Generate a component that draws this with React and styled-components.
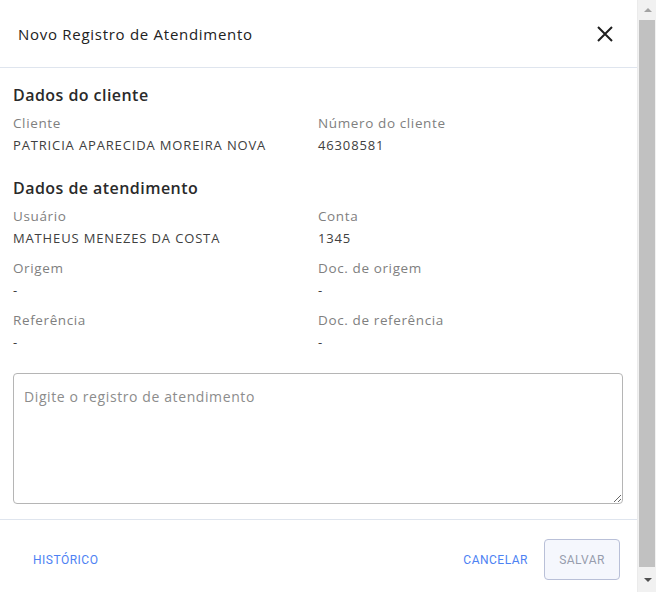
import React from "react";
import styled, { createGlobalStyle } from "styled-components";

const Global = createGlobalStyle`
  html, body { margin: 0; padding: 0; background: #ffffff; }
  * { box-sizing: border-box; }
`;

const Dialog = styled.div`
  width: 656px;
  height: 592px;
  display: flex;
  background: #ffffff;
  overflow: hidden;
  font-family: "Open Sans", "Liberation Sans", sans-serif;
  color: #333333;
`;

const Content = styled.div`
  flex: 1;
  min-width: 0;
  overflow: hidden;
`;

const ScrollTrack = styled.div`
  width: 19px;
  flex: none;
  display: flex;
  flex-direction: column;
  background: #f1f1f1;
  border-left: 1px solid #ebebeb;
`;

const ScrollArrow = styled.div`
  height: ${(p) => (p.$down ? 25 : 20)}px;
  display: flex;
  align-items: center;
  justify-content: center;
  padding-left: 1px;
`;

const ScrollThumb = styled.div`
  flex: 1;
  margin: 0 1px 0 1px;
  background: #c1c1c1;
`;

const Header = styled.header`
  height: 68px;
  display: flex;
  align-items: center;
  justify-content: space-between;
  padding: 0 24px 0 18px;
  border-bottom: 1px solid #dfe5ee;
`;

const Title = styled.h1`
  margin: 0;
  font-size: 15px;
  font-weight: 400;
  letter-spacing: 0.72px;
  color: #222222;
`;

const CloseButton = styled.button`
  width: 16px;
  height: 16px;
  padding: 0;
  border: none;
  background: transparent;
  display: flex;
  align-items: center;
  justify-content: center;
  cursor: pointer;
`;

const Body = styled.div`
  padding: 15px 14px 15px 13px;
  border-bottom: 1px solid #dfe5ee;
`;

const Section = styled.section`
  & + & { margin-top: 21px; }
`;

const SectionTitle = styled.h2`
  margin: 0 0 6px;
  font-size: 16px;
  line-height: 24px;
  font-weight: 600;
  letter-spacing: 0.45px;
  color: #2a2a2a;
`;

const FieldGrid = styled.div`
  display: grid;
  grid-template-columns: 305px 1fr;
  row-gap: 10px;
`;

const Field = styled.div`
  display: flex;
  flex-direction: column;
  gap: 2px;
`;

const Label = styled.span`
  font-size: 13.5px;
  line-height: 20px;
  letter-spacing: 0.62px;
  color: #808080;
`;

const Value = styled.span`
  font-size: 13px;
  line-height: 20px;
  letter-spacing: 0.85px;
  color: #404040;
`;

const Notes = styled.textarea`
  display: block;
  width: 100%;
  height: 131px;
  margin-top: 21px;
  padding: 13px 10px;
  border: 1px solid #b5b5b5;
  border-radius: 4px;
  font-family: inherit;
  font-size: 14px;
  line-height: 20px;
  letter-spacing: 0.6px;
  color: #333333;
  resize: vertical;
  outline: none;
  &::placeholder { color: #8c8c8c; }
`;

const Footer = styled.footer`
  display: flex;
  align-items: center;
  justify-content: space-between;
  padding: 19px 17px 21px 20px;
`;

const Actions = styled.div`
  display: flex;
  align-items: center;
  gap: 3px;
`;

const TextButton = styled.button`
  border: none;
  background: transparent;
  padding: 0 13px;
  height: 41px;
  font-family: "Roboto", "Liberation Sans", sans-serif;
  font-size: 12px;
  font-weight: 400;
  letter-spacing: 0.5px;
  color: #4d82f3;
  text-transform: uppercase;
  cursor: pointer;
`;

const OutlineButton = styled.button`
  width: 76px;
  height: 41px;
  border: 1px solid #b9c0d8;
  border-radius: 4px;
  background: #f5f7fd;
  font-family: "Roboto", "Liberation Sans", sans-serif;
  font-size: 12px;
  font-weight: 400;
  letter-spacing: 0.45px;
  color: #979dad;
  text-transform: uppercase;
`;

const clientFields = [
  ["Cliente", "PATRICIA APARECIDA MOREIRA NOVA"],
  ["Número do cliente", "46308581"],
];

const serviceFields = [
  ["Usuário", "MATHEUS MENEZES DA COSTA"],
  ["Conta", "1345"],
  ["Origem", "-"],
  ["Doc. de origem", "-"],
  ["Referência", "-"],
  ["Doc. de referência", "-"],
];

function Fields({ items }) {
  return (
    <FieldGrid>
      {items.map(([label, value]) => (
        <Field key={label}>
          <Label>{label}</Label>
          <Value>{value}</Value>
        </Field>
      ))}
    </FieldGrid>
  );
}

export default function App() {
  return (
    <>
      <Global />
      <Dialog>
        <Content>
          <Header>
            <Title>Novo Registro de Atendimento</Title>
            <CloseButton aria-label="Fechar">
              <svg width="16" height="16" viewBox="0 0 16 16">
                <path d="M1 1 L15 15 M15 1 L1 15" stroke="#1f1f1f" strokeWidth="2" />
              </svg>
            </CloseButton>
          </Header>
          <Body>
            <Section>
              <SectionTitle>Dados do cliente</SectionTitle>
              <Fields items={clientFields} />
            </Section>
            <Section>
              <SectionTitle>Dados de atendimento</SectionTitle>
              <Fields items={serviceFields} />
            </Section>
            <Notes placeholder="Digite o registro de atendimento" />
          </Body>
          <Footer>
            <TextButton>Histórico</TextButton>
            <Actions>
              <TextButton>Cancelar</TextButton>
              <OutlineButton>Salvar</OutlineButton>
            </Actions>
          </Footer>
        </Content>
        <ScrollTrack aria-hidden="true">
          <ScrollArrow>
            <svg width="8" height="4" viewBox="0 0 8 4">
              <path d="M0 4 L4 0 L8 4 Z" fill="#a3a3a3" />
            </svg>
          </ScrollArrow>
          <ScrollThumb />
          <ScrollArrow $down>
            <svg width="8" height="4" viewBox="0 0 8 4">
              <path d="M0 0 L8 0 L4 4 Z" fill="#505050" />
            </svg>
          </ScrollArrow>
        </ScrollTrack>
      </Dialog>
    </>
  );
}
